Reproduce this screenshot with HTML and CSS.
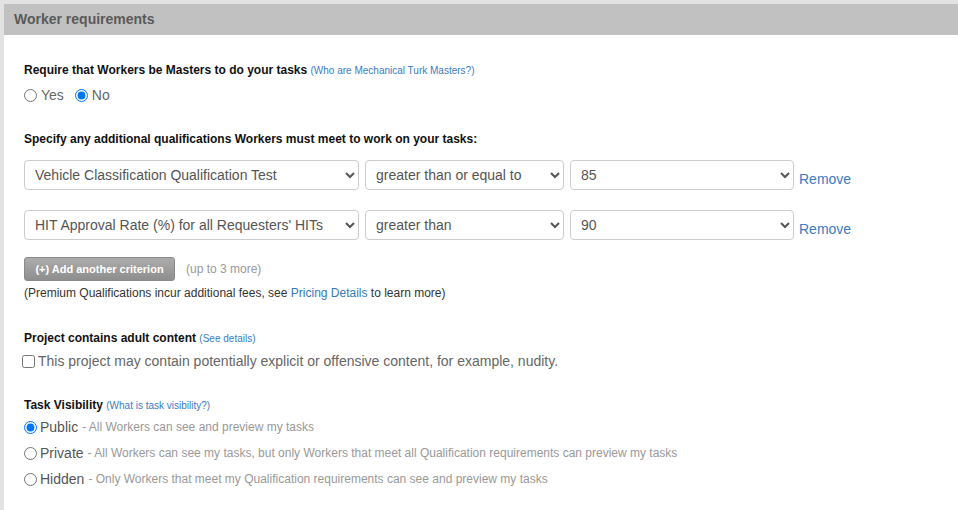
FILE: index.html
```html
<!DOCTYPE html>
<html>
<head>
<meta charset="utf-8">
<title>Worker requirements</title>
<link rel="stylesheet" href="styles.css">
</head>
<body>
<div class="panel">
  <div class="panel-head">Worker requirements</div>
  <div class="panel-body">
    <div class="heading">Require that Workers be Masters to do your tasks <a class="small-link" href="#">(Who are Mechanical Turk Masters?)</a></div>
    <div class="yesno">
      <label class="opt"><input type="radio" name="masters"> Yes</label>
      <label class="opt"><input type="radio" name="masters" checked> No</label>
    </div>

    <div class="heading h-quals">Specify any additional qualifications Workers must meet to work on your tasks:</div>
    <div class="crit-row">
      <select class="sel sel-q"><option>Vehicle Classification Qualification Test</option></select>
      <select class="sel sel-c"><option>greater than or equal to</option></select>
      <select class="sel sel-v"><option>85</option></select>
      <a class="remove" href="#">Remove</a>
    </div>
    <div class="crit-row row2">
      <select class="sel sel-q"><option>HIT Approval Rate (%) for all Requesters' HITs</option></select>
      <select class="sel sel-c"><option>greater than</option></select>
      <select class="sel sel-v"><option>90</option></select>
      <a class="remove" href="#">Remove</a>
    </div>
    <div class="add-row">
      <button class="btn-add">(+) Add another criterion</button>
      <span class="muted">(up to 3 more)</span>
    </div>
    <div class="note">(Premium Qualifications incur additional fees, see <a href="#">Pricing Details</a> to learn more)</div>

    <div class="heading h-adult">Project contains adult content <a class="small-link" href="#">(See details)</a></div>
    <label class="check-line"><input type="checkbox">This project may contain potentially explicit or offensive content, for example, nudity.</label>

    <div class="heading h-vis">Task Visibility <a class="small-link" href="#">(What is task visibility?)</a></div>
    <div class="vis-list">
      <label class="vis"><input type="radio" name="vis" checked><span class="vis-name">Public</span><span class="vis-desc">- All Workers can see and preview my tasks</span></label>
      <label class="vis"><input type="radio" name="vis"><span class="vis-name">Private</span><span class="vis-desc">- All Workers can see my tasks, but only Workers that meet all Qualification requirements can preview my tasks</span></label>
      <label class="vis"><input type="radio" name="vis"><span class="vis-name">Hidden</span><span class="vis-desc">- Only Workers that meet my Qualification requirements can see and preview my tasks</span></label>
    </div>
  </div>
</div>
</body>
</html>
```

FILE: styles.css
```css
html, body {
  margin: 0;
  height: 510px;
  overflow: hidden;
}
body {
  background: #e2e2e2;
  padding: 4px 0 0 4px;
  box-sizing: border-box;
  font-family: "Liberation Sans", Arial, sans-serif;
  color: #333;
}
.panel {
  background: #fff;
  height: 506px;
}
.panel-head {
  height: 31px;
  line-height: 30px;
  background: #c1c1c1;
  color: #5a5a5a;
  font-weight: bold;
  font-size: 14px;
  padding-left: 10px;
}
.panel-body {
  padding: 27px 20px 0 20px;
}
a {
  color: #337ab7;
  text-decoration: none;
}
.heading {
  font-size: 12px;
  font-weight: bold;
  color: #111;
  line-height: 16px;
}
.small-link {
  font-size: 10px;
  font-weight: normal;
  color: #3a7cc4;
}
.yesno {
  display: flex;
  align-items: center;
  gap: 11px;
  margin-top: 6px;
  height: 20px;
}
.opt {
  display: flex;
  align-items: center;
  font-size: 14px;
  color: #666;
}
.opt input {
  margin: 0 4px 0 0;
  width: 13px;
  height: 13px;
}
.h-quals {
  margin-top: 26px;
}
.crit-row {
  display: flex;
  align-items: flex-start;
  gap: 6px;
  margin-top: 13px;
}
.row2 {
  margin-top: 20px;
}
.sel {
  height: 30px;
  border: 1px solid #ccc;
  border-radius: 4px;
  background: #fff;
  color: #555;
  font-family: "Liberation Sans", Arial, sans-serif;
  font-size: 14px;
  padding: 0 4px 0 6px;
  box-sizing: border-box;
}
.sel-q { width: 335px; }
.sel-c { width: 199px; }
.sel-v { width: 224px; }
.remove {
  font-size: 14px;
  margin-top: 11px;
  margin-left: -1px;
  line-height: 16px;
  color: #3a7cc4;
}
.add-row {
  display: flex;
  align-items: center;
  gap: 11px;
  margin-top: 17px;
}
.btn-add {
  width: 151px;
  height: 24px;
  border: 1px solid #8a8a8a;
  border-radius: 3px;
  background: linear-gradient(#acacac, #8e8e8e);
  color: #fff;
  font-family: "Liberation Sans", Arial, sans-serif;
  font-weight: bold;
  font-size: 11px;
  padding: 0;
}
.muted {
  font-size: 12px;
  color: #999;
}
.note {
  font-size: 12px;
  line-height: 16px;
  margin-top: 4px;
  color: #333;
}
.h-adult {
  margin-top: 29px;
}
.check-line {
  display: flex;
  align-items: center;
  height: 20px;
  margin-top: 4px;
  margin-left: -2px;
  font-size: 14px;
  color: #666;
}
.check-line input {
  margin: 0 3px 0 0;
  width: 13px;
  height: 13px;
}
.h-vis {
  margin-top: 26px;
}
.vis-list {
  display: flex;
  flex-direction: column;
}
.vis {
  display: flex;
  align-items: center;
  height: 26px;
}
.vis input {
  margin: 0 3px 0 0;
  width: 13px;
  height: 13px;
}
.vis-name {
  font-size: 14px;
  color: #555;
  margin-right: 4px;
}
.vis-desc {
  font-size: 12px;
  color: #999;
}
```
